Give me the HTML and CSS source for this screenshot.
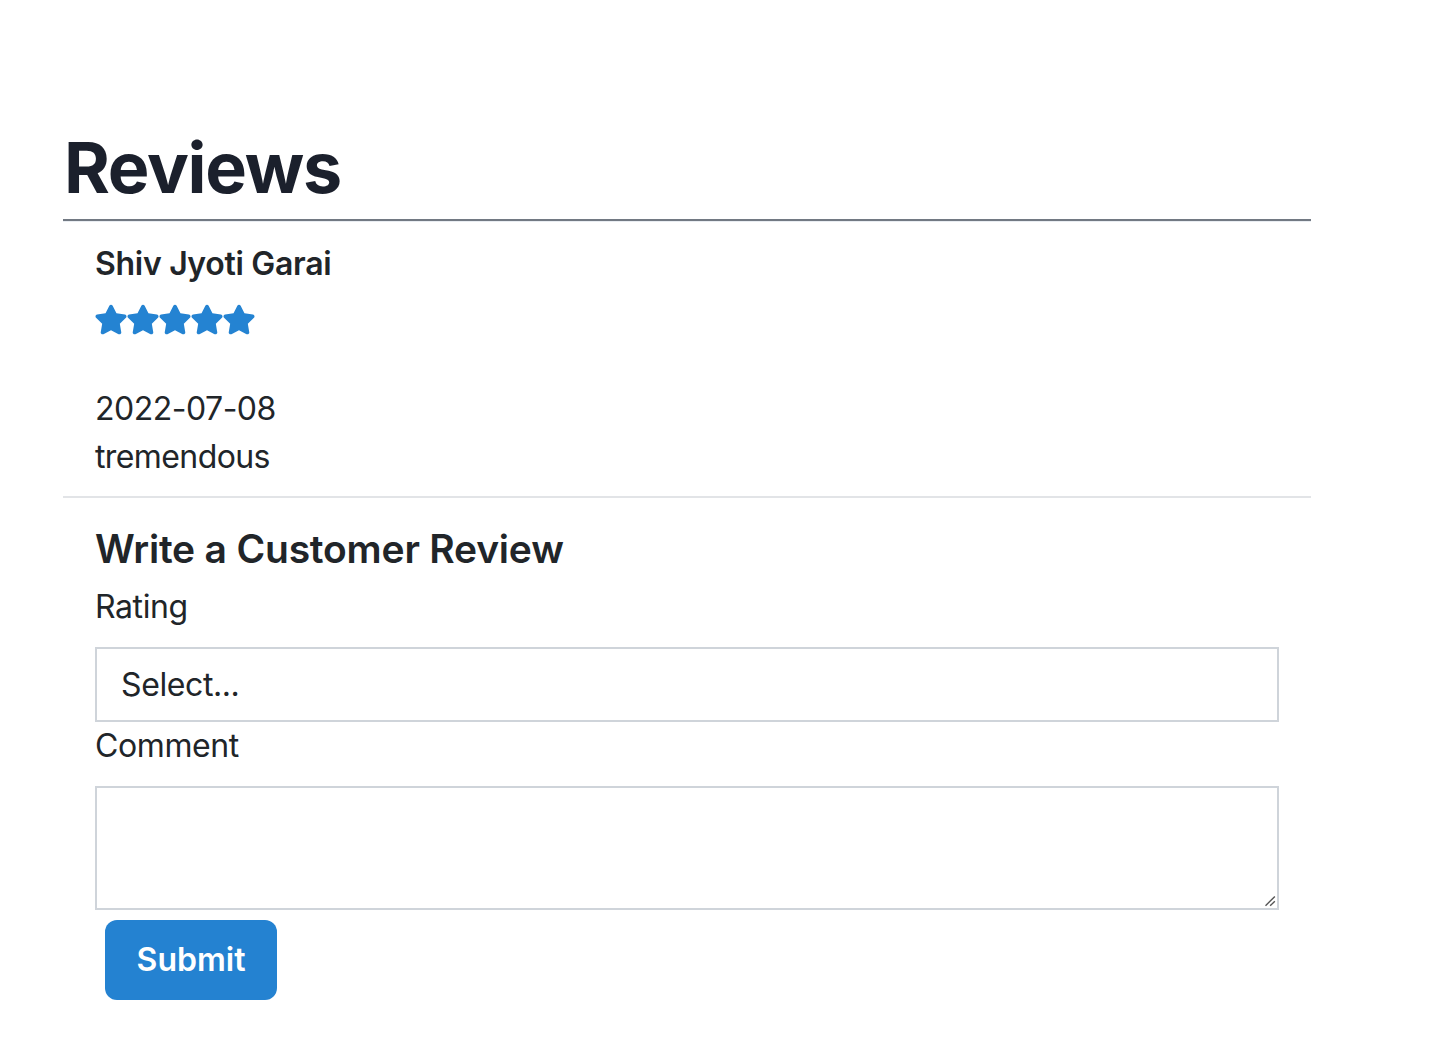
FILE: index.html
```html
<!DOCTYPE html>
<html lang="en">
<head>
<meta charset="utf-8">
<title>Reviews</title>
<link rel="stylesheet" href="styles.css">
</head>
<body>
<main class="page">
  <section class="reviews">
    <h2 class="reviews-title">Reviews</h2>
    <div class="list">
      <div class="item">
        <strong class="name">Shiv Jyoti Garai</strong>
        <div class="rating">
          <svg class="star" viewBox="12 0 552 512"><path d="M259.3 17.8L194 150.2 47.9 171.5c-26.2 3.8-36.7 36.1-17.7 54.6l105.7 103-25 145.5c-4.5 26.3 23.2 46 46.4 33.7L288 439.6l130.7 68.7c23.2 12.2 50.9-7.4 46.4-33.7l-25-145.5 105.7-103c19-18.5 8.5-50.8-17.7-54.6L382 150.2 316.7 17.8c-11.7-23.6-45.6-23.9-57.4 0z"/></svg>
          <svg class="star" viewBox="12 0 552 512"><path d="M259.3 17.8L194 150.2 47.9 171.5c-26.2 3.8-36.7 36.1-17.7 54.6l105.7 103-25 145.5c-4.5 26.3 23.2 46 46.4 33.7L288 439.6l130.7 68.7c23.2 12.2 50.9-7.4 46.4-33.7l-25-145.5 105.7-103c19-18.5 8.5-50.8-17.7-54.6L382 150.2 316.7 17.8c-11.7-23.6-45.6-23.9-57.4 0z"/></svg>
          <svg class="star" viewBox="12 0 552 512"><path d="M259.3 17.8L194 150.2 47.9 171.5c-26.2 3.8-36.7 36.1-17.7 54.6l105.7 103-25 145.5c-4.5 26.3 23.2 46 46.4 33.7L288 439.6l130.7 68.7c23.2 12.2 50.9-7.4 46.4-33.7l-25-145.5 105.7-103c19-18.5 8.5-50.8-17.7-54.6L382 150.2 316.7 17.8c-11.7-23.6-45.6-23.9-57.4 0z"/></svg>
          <svg class="star" viewBox="12 0 552 512"><path d="M259.3 17.8L194 150.2 47.9 171.5c-26.2 3.8-36.7 36.1-17.7 54.6l105.7 103-25 145.5c-4.5 26.3 23.2 46 46.4 33.7L288 439.6l130.7 68.7c23.2 12.2 50.9-7.4 46.4-33.7l-25-145.5 105.7-103c19-18.5 8.5-50.8-17.7-54.6L382 150.2 316.7 17.8c-11.7-23.6-45.6-23.9-57.4 0z"/></svg>
          <svg class="star" viewBox="12 0 552 512"><path d="M259.3 17.8L194 150.2 47.9 171.5c-26.2 3.8-36.7 36.1-17.7 54.6l105.7 103-25 145.5c-4.5 26.3 23.2 46 46.4 33.7L288 439.6l130.7 68.7c23.2 12.2 50.9-7.4 46.4-33.7l-25-145.5 105.7-103c19-18.5 8.5-50.8-17.7-54.6L382 150.2 316.7 17.8c-11.7-23.6-45.6-23.9-57.4 0z"/></svg>
        </div>
        <p class="date">2022-07-08</p>
        <p class="comment">tremendous</p>
      </div>
      <div class="item form-item">
        <h2 class="form-title">Write a Customer Review</h2>
        <form class="review-form">
          <label class="label label-first" for="rating">Rating</label>
          <div class="select" id="rating">Select...</div>
          <label class="label" for="comment">Comment</label>
          <div class="textarea" id="comment">
            <svg class="grip" viewBox="0 0 12 12"><path d="M11 3 L3 11 M11 7 L7 11" stroke="#555" stroke-width="1.2" fill="none"/></svg>
          </div>
          <div class="actions"><span class="btn">Submit</span></div>
        </form>
      </div>
    </div>
  </section>
</main>
</body>
</html>
```
FILE: styles.css
```css
* { box-sizing: border-box; }
html, body { margin: 0; padding: 0; background: #fff; }
body {
  font-family: Inter, "Noto Sans", "Liberation Sans", sans-serif;
  color: #212529;
  font-size: 32px;
  line-height: 1.5;
  letter-spacing: -0.4px;
}
.page {
  padding: 126px 0 0 63px;
}
.reviews {
  width: 1248px;
}
.reviews-title {
  margin: 0 0 9px 1px;
  font-size: 70px;
  font-weight: 700;
  line-height: 1.2;
  color: #1b202c;
  letter-spacing: -1.3px;
}
.list {
  border-top: 2px solid #727983;
  box-shadow: 0 1px 0 #e9edf2 inset;
}
.item {
  padding: 19px 32px 15px;
}
.name {
  display: block;
  font-weight: 600;
  letter-spacing: -0.3px;
}
.rating {
  display: flex;
  margin-top: 16px;
  height: 31px;
}
.star {
  width: 32px;
  height: 31px;
  fill: #2483d2;
}
.date {
  margin: 50px 0 0;
  letter-spacing: -0.5px;
}
.comment {
  margin: 0;
  letter-spacing: -0.6px;
}
.form-item {
  border-top: 2px solid #e2e4e7;
  padding-top: 28px;
}
.form-title {
  margin: 0;
  font-size: 39px;
  font-weight: 600;
  line-height: 1.2;
  letter-spacing: -0.2px;
}
.review-form {
  display: flex;
  flex-direction: column;
  align-items: flex-start;
  width: 1184px;
}
.label {
  margin: 0 0 16px;
  line-height: 48px;
}
.label-first {
  margin-top: 10px;
}
.select {
  width: 100%;
  height: 75px;
  border: 2px solid #cfd4da;
  padding: 0 24px;
  line-height: 71px;
  color: #212529;
}
.textarea {
  position: relative;
  width: 100%;
  height: 124px;
  border: 2px solid #cfd4da;
}
.grip {
  position: absolute;
  right: 1px;
  bottom: 1px;
  width: 14px;
  height: 14px;
}
.actions {
  padding: 10px 0 0 10px;
}
.btn {
  display: inline-block;
  width: 172px;
  height: 80px;
  border-radius: 12px;
  background: #2482d1;
  color: #fff;
  font-weight: 600;
  text-align: center;
  line-height: 80px;
  letter-spacing: 0;
}
```
